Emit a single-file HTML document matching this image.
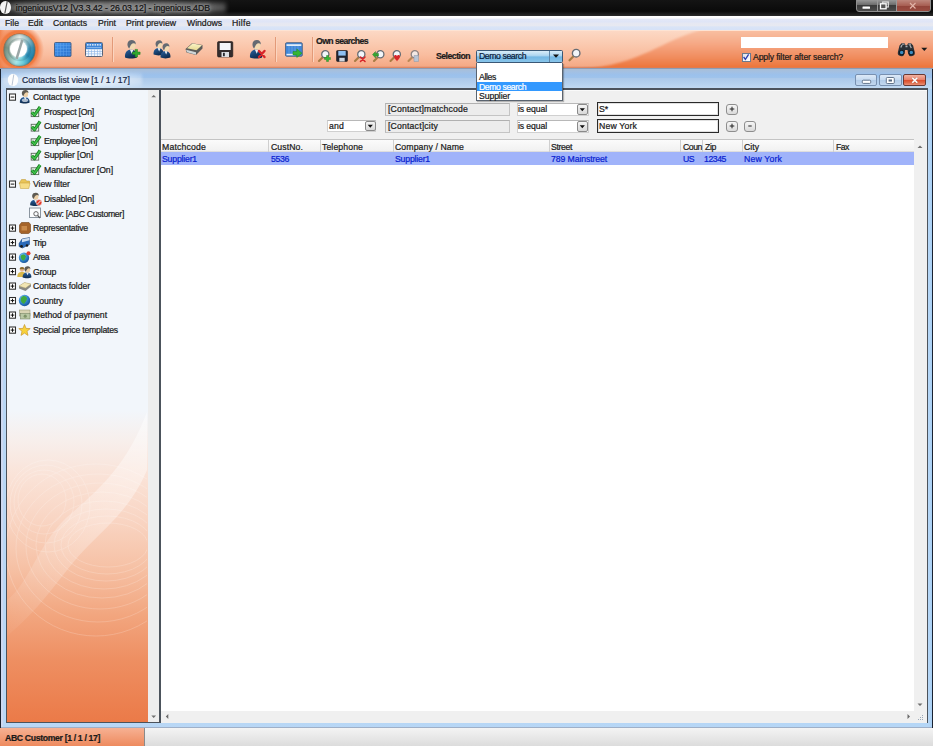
<!DOCTYPE html>
<html><head><meta charset="utf-8"><title>ingeniousV12</title>
<style>
html,body{margin:0;padding:0;}
body{width:933px;height:746px;position:relative;overflow:hidden;background:#fff;font-family:"Liberation Sans",sans-serif;font-size:8.7px;color:#1a1a1a;}
.a{position:absolute;box-sizing:border-box;}
.t{-webkit-text-stroke:.22px currentColor;position:absolute;line-height:12px;height:12px;white-space:pre;font-size:8.7px;}
svg{position:absolute;overflow:visible;}
.fld{background:#ececec;border:1px solid #c4c4c4;border-top-color:#b0b0b0;border-left-color:#b8b8b8;}
.cmb{background:#fff;border:1px solid #d0d0d0;border-top-color:#b8b8b8;}
.cbtn{background:linear-gradient(#f4f4f4,#d8d8d8);border:1px solid #8a8a8a;border-radius:2px;}
.val{background:#fff;border:1px solid #2a2a2a;box-shadow:inset 0 0 0 1px #e0e0e0;}
.pm{background:linear-gradient(#f6f6f6,#dadada);border:1px solid #8e8e8e;border-radius:3px;}
.sep{width:1px;background:#e39a78;box-shadow:1px 0 0 #fbd5c0;}
.col{width:1px;height:12px;top:140px;background:#cfcfcf;}
</style></head><body>
<!-- title bar -->
<div class="a" id="titlebar" style="left:0;top:0;width:933px;height:16px;background:linear-gradient(#141414,#0a0a0a 70%,#2a2a2a 100%);"></div>
<div class="a" style="left:4px;top:1px;width:222px;height:13px;background:radial-gradient(ellipse at center,#8c8c8c 0%,#777 55%,rgba(60,60,60,0) 100%);filter:blur(2px);"></div>
<!-- menubar -->
<div class="a" id="menubar" style="left:0;top:16px;width:933px;height:14px;background:linear-gradient(#ffffff 0%,#fdfdfe 14%,#e3e8f7 24%,#dfe5f6 42%,#e6e8f2 52%,#e7e9f1 68%,#dae4f6 78%,#d6e2f7 100%);"></div>
<!-- toolbar -->
<div class="a" id="toolbar" style="left:0;top:30px;width:933px;height:38px;background:linear-gradient(#fcd9c6 0%,#fbcdb4 30%,#f9bd9f 65%,#f5aa86 94%,#dc8a68 100%);"></div>
<!-- toolbar right darker swoosh -->
<svg style="left:0;top:30px;overflow:hidden" width="933" height="38" viewBox="0 0 933 38">
<defs>
<filter id="sb" x="-5%" y="-50%" width="110%" height="200%"><feGaussianBlur stdDeviation="1.300"/></filter>
<linearGradient id="sw" gradientUnits="userSpaceOnUse" x1="0" y1="0" x2="0" y2="38"><stop offset="0" stop-color="#f9c0a3"/><stop offset="0.35" stop-color="#f6a986"/><stop offset="0.7" stop-color="#f18e60"/><stop offset="1" stop-color="#ec7439"/></linearGradient>
<linearGradient id="swf" x1="0" y1="0" x2="1" y2="0"><stop offset="0" stop-color="#fff" stop-opacity="1"/><stop offset="1" stop-color="#fff" stop-opacity="0"/></linearGradient>
</defs>
<path d="M583 39 C640 35 662 10 704 -1 L704 -8 L945 -8 L945 46 L583 46 Z" fill="url(#sw)" filter="url(#sb)"/>
<rect x="0" y="0" width="933" height="1" fill="#fde3d3"/>
<rect x="0" y="37" width="933" height="1" fill="#d9805c" opacity=".55"/>
</svg>
<!-- logo -->
<div class="a" style="left:0;top:30px;width:16px;height:38px;background:linear-gradient(90deg,rgba(240,122,64,.9) 0,rgba(240,122,64,.5) 5px,rgba(240,122,64,0) 16px);"></div>
<div class="a" style="left:0;top:30px;width:46px;height:38px;background:radial-gradient(circle at 19px 19.500px,#f07a40 0,#f07a40 18.500px,rgba(243,140,92,0.75) 20.500px,rgba(248,175,138,0) 25px);"></div>
<div class="a" style="left:3.500px;top:33.500px;width:31.500px;height:32px;border-radius:50%;background:conic-gradient(from 0deg,#dfe8e6 0deg,#9cc4cb 35deg,#3a8fb2 80deg,#2489b3 125deg,#6fcfdc 165deg,#a8e6e8 195deg,#8fb0a4 235deg,#7a9384 280deg,#a9bab2 320deg,#dfe8e6 360deg);box-shadow:inset 0 0 2.500px rgba(20,50,50,.65),0 0 0 .6px rgba(70,100,90,.6);"></div>
<div class="a" style="left:7.500px;top:38px;width:23.500px;height:23px;border-radius:50%;background:radial-gradient(circle,rgba(255,255,255,0) 55%,rgba(40,80,90,.28) 75%,rgba(255,255,255,0) 100%);"></div>
<div class="a" style="left:10.200px;top:41.200px;width:17px;height:16.300px;border-radius:50%;background:#fff;box-shadow:0 0 1.500px .8px rgba(255,255,255,.55);"></div>
<svg style="left:0;top:30px" width="40" height="38"><path d="M22.300 9.800 L16.600 28.800" stroke="#9aa6a6" stroke-width="2.500" fill="none"/></svg>
<!-- separators -->
<div class="a sep" style="left:112px;top:37px;height:25px;"></div>
<div class="a sep" style="left:275px;top:37px;height:25px;"></div>
<div class="a sep" style="left:312px;top:37px;height:25px;"></div>
<!-- big icons -->
<svg style="left:0;top:30px" width="470" height="38" viewBox="0 30 470 38">
<defs>
<linearGradient id="bl" x1="0" y1="0" x2="1" y2="1"><stop offset="0" stop-color="#4a9af0"/><stop offset="1" stop-color="#1f6ac8"/></linearGradient>
<linearGradient id="suit" x1="0" y1="0" x2=".6" y2="1"><stop offset="0" stop-color="#2c64a4"/><stop offset=".5" stop-color="#1a4676"/><stop offset="1" stop-color="#0e2a4c"/></linearGradient>
<linearGradient id="tray" x1="0" y1="0" x2="0" y2="1"><stop offset="0" stop-color="#fbf5c8"/><stop offset="1" stop-color="#e6d890"/></linearGradient>
<g id="person">
<path d="M-6 8.300 C-6.600 3 -3.500 .3 0 .3 C3.500 .3 6.600 3 6 8.300 C3 9.600 -3 9.600 -6 8.300 Z" fill="url(#suit)"/>
<path d="M-1.200 .3 L.8 4.600 L2.400 .6 Z" fill="#eef0f4"/>
<ellipse cx="1" cy="-4" rx="3.500" ry="4.400" fill="#f2dab2"/>
<path d="M-1.800 -.6 C-5 -4 -3.600 -9.300 1 -9.200 C3.800 -9.100 5 -7 4.700 -4.800 C3.600 -6.400 1.600 -6.300 .2 -4.600 C-.8 -3.400 -1 -2 -1.800 -.6 Z" fill="#646a72"/>
</g>
</defs>
<!-- grid icon -->
<rect x="54.5" y="42.5" width="16.5" height="14" rx="1" fill="url(#bl)" stroke="#4a6488" stroke-width="1"/>
<path d="M57.5 43v13M60.5 43v13M63.5 43v13M66.5 43v13M69 43v13M55 45.5h16M55 48.5h16M55 51.5h16M55 54.2h16" stroke="#6fb0f5" stroke-width=".5" opacity=".7"/>
<!-- calendar icon -->
<rect x="85.500" y="42.500" width="17" height="14" rx="1" fill="#f4f8fd" stroke="#5a6478" stroke-width="1"/>
<rect x="86" y="43" width="16" height="6.200" fill="#3f86d8"/>
<path d="M87 44.800h14" stroke="#fff" stroke-width="1.200" stroke-dasharray="1.600 .9"/>
<path d="M87 47.600h14" stroke="#a8ccf2" stroke-width=".7"/>
<path d="M88.500 49.500v6.500M91.500 49.500v6.500M94.500 49.500v6.500M97.500 49.500v6.500M100 49.500v6.500M86 51.500h16M86 53.800h16" stroke="#8ab4e6" stroke-width=".6"/>
<!-- person add -->
<use href="#person" x="131" y="49.200"/>
<path d="M132.500 52h2.600v-2.600h2.400v2.600h2.600v2.400h-2.600v2.600h-2.400v-2.600h-2.600z" fill="#2fa82f" stroke="#1c7a1c" stroke-width=".5"/>
<!-- two persons -->
<g transform="translate(158.500 47.800) scale(.82)"><use href="#person"/></g>
<g transform="translate(165.500 50.800) scale(.82)"><use href="#person"/></g>
<!-- tray -->
<path d="M185.500 49 L192 43.200 L202.500 45 L202.500 48.500 L196 55 L186.500 52.500 Z" fill="#5c5c5a"/>
<path d="M187 48.300 L192.500 43.500 L202 45.200 L196.500 50.200 Z" fill="url(#tray)"/>
<path d="M186 49.800 L196 52.200 L196 54.800 L187 52.300 Z" fill="#cfd6d8"/>
<!-- floppy -->
<rect x="217.500" y="41.600" width="15.300" height="15.400" rx="1.200" fill="#332c2c" stroke="#1c1616" stroke-width=".6"/>
<rect x="219.700" y="43" width="11" height="7" fill="#f4f6fa"/>
<rect x="221.500" y="52" width="7.500" height="5" fill="#dcdee2"/>
<rect x="223" y="52.800" width="1.800" height="3.400" fill="#2a2a2e"/>
<!-- person delete -->
<use href="#person" x="256" y="49.200"/>
<path d="M259 51 L264.500 57 M264.500 51 L259 57" stroke="#d8262a" stroke-width="2.400" stroke-linecap="round"/>
<!-- calendar arrow -->
<rect x="285.500" y="42.700" width="16.800" height="13.600" rx="1.200" fill="#3f86d8" stroke="#5a6a86" stroke-width="1"/>
<rect x="286.500" y="44.300" width="14.800" height="1.600" fill="#f4f8fd"/>
<rect x="286.500" y="53.800" width="8" height="1.500" fill="#e4eefa"/>
<path d="M289 46v8M292 46v8M295 46v8M298 46v8" stroke="#7fb0e8" stroke-width=".5"/>
<path d="M293 51.500h3.800v-2.600l5.200 4.300-5.200 4.300v-2.600h-3.800z" fill="#35b535" stroke="#1c8a1c" stroke-width=".5"/>
</svg>
<svg style="left:0;top:30px" width="933" height="38" viewBox="0 30 933 38">
<defs>
<g id="mag">
<path d="M1 11 L5 7" stroke="#a87c44" stroke-width="2.100" stroke-linecap="round"/>
<circle cx="7.300" cy="4.300" r="3.600" fill="#f2f6fa" stroke="#666c74" stroke-width="1.300"/>
</g>
</defs>
<use href="#mag" x="318" y="50"/>
<path d="M324.500 57.500h2v-2h2v2h2v2h-2v2h-2v-2h-2z" fill="#35b535" stroke="#1c7a1c" stroke-width=".4"/>
<rect x="336.500" y="50.500" width="11" height="11" rx="1" fill="#1f2430" stroke="#0c0e14" stroke-width=".5"/>
<rect x="338.300" y="51" width="7.400" height="4.600" fill="#8ec0f2"/>
<rect x="339.300" y="57.800" width="5.400" height="3.700" fill="#cfd6df"/>
<use href="#mag" x="354" y="50"/>
<path d="M360.500 57 L365 61.500 M365 57 L360.500 61.500" stroke="#d8262a" stroke-width="1.600" stroke-linecap="round"/>
<use href="#mag" x="373" y="50"/>
<path d="M372.500 54.500 l3-3 v2 h3 v2.500 h-3 v2z" fill="#35a535" stroke="#1c7a1c" stroke-width=".4"/>
<use href="#mag" x="389.500" y="50"/>
<path d="M394 56.500 c0-2 3-2 3 0 c0-2 3-2 3 0 c0 2-3 4-3 5 c0-1-3-3-3-5z" fill="#d8262a"/>
<use href="#mag" x="407.500" y="50" opacity=".75"/>
<path d="M414 55.500 h4.500 v6 h-4.500z" fill="#b8c4d4" stroke="#8a96a8" stroke-width=".5"/>
<!-- magnifier beside combo -->
<g transform="translate(568.500,48.700) scale(1.050)"><use href="#mag"/></g>
<!-- binoculars -->
<path d="M899.500 45.500 l2-2.300 h3 l1 2 h1.600 l1-2 h3 l2 2.300 l1.600 6.500 a3.300 3.300 0 0 1 -6.600 1.500 l-.6-3.500 h-2.400 l-.6 3.500 a3.300 3.300 0 0 1 -6.600-1.500z" fill="#2b3036"/>
<circle cx="901.700" cy="52.500" r="2.300" fill="#3a8cc0" stroke="#121c26" stroke-width="1.100"/>
<circle cx="911.300" cy="52.500" r="2.300" fill="#3a8cc0" stroke="#121c26" stroke-width="1.100"/>
<path d="M902 44.200h2.500M908.500 44.200h2.500" stroke="#aab2ba" stroke-width="1"/>
<path d="M900.800 47.500l1.200-2.600M905.500 46.500h2M909.800 45l1.500 3" stroke="#c8ccd0" stroke-width="1.300" opacity=".8"/>
<path d="M921.300 47.800 h6 l-3 3.200z" fill="#1a1a1a"/>
</svg>
<!-- selection combo -->
<div class="a" style="left:475.800px;top:49.500px;width:87.200px;height:13px;border:1px solid #3a5876;border-radius:1.500px;background:linear-gradient(#d8ecf8 0%,#b0d7f1 40%,#74b7e4 55%,#88c5ea 100%);"></div>
<div class="a" style="left:549px;top:50.500px;width:1px;height:11px;background:#5f86a8;"></div>
<svg style="left:552px;top:53px" width="8" height="6"><path d="M1 1.500h6l-3 3.300z" fill="#111"/></svg>
<!-- search input -->
<div class="a" style="left:741px;top:36.500px;width:147px;height:11.500px;background:#fff;"></div>
<!-- checkbox -->
<div class="a" style="left:741.500px;top:52.500px;width:9px;height:9px;background:linear-gradient(135deg,#dfe3ea,#fff);border:1px solid #6a7a90;"></div>
<svg style="left:741px;top:52px" width="10" height="10"><path d="M2.600 5 L4.400 7.400 L7.600 2.400" stroke="#2a3cae" stroke-width="1.300" fill="none"/></svg>
<!-- top window buttons -->
<div class="a" style="left:856px;top:-2px;width:75px;height:14px;border:1px solid #8f8f8f;border-radius:0 0 3px 3px;background:linear-gradient(#a2a2a2,#6c6c6c 48%,#3a3a3a 52%,#4c4c4c 100%);overflow:hidden;">
<div class="a" style="left:39px;top:0;width:36px;height:14px;background:linear-gradient(#c28e84,#a65c50 50%,#92443a 52%,#9e5044 100%);"></div>
<div class="a" style="left:19.500px;top:0;width:1px;height:14px;background:#9a9a9a;"></div>
<div class="a" style="left:39px;top:0;width:1px;height:14px;background:#9a9a9a;"></div>
</div>
<svg style="left:856px;top:0" width="75" height="12">
<rect x="6.500" y="6.500" width="7.500" height="2.300" fill="#fff" rx=".5"/>
<rect x="26.700" y="2" width="5.600" height="5" fill="none" stroke="#e8e8e8" stroke-width="1.100"/>
<rect x="24.500" y="3.800" width="5.600" height="5" fill="#555" stroke="#fff" stroke-width="1.300"/>
<path d="M54 3 L59.500 8.500 M59.500 3 L54 8.500" stroke="#e2b4a8" stroke-width="1.150"/>
</svg>

<!-- mdi frame -->
<div class="a" id="frame" style="left:0;top:68px;width:933px;height:660px;background:linear-gradient(90deg,#cfd9f0 0,#cdd8f0 3px,#b9d7f5 3.500px,#b5d6f6 929px,#a8cff4 932px,#a8cff4 933px);"></div>
<div class="a" id="frametop" style="left:0;top:68px;width:933px;height:21px;background:linear-gradient(#8c9cb4 0,#8c9cb4 1px,#a8bfd9 1.500px,#a3c0e3 4px,#9bc1ec 7px,#9fc3eb 9.500px,#acc9ea 10.500px,#b4d0ee 15px,#c0d9f2 20px);"></div>
<div class="a" style="left:2px;top:72px;width:140px;height:16px;background:radial-gradient(ellipse at center,rgba(255,255,255,.75) 0%,rgba(255,255,255,.55) 50%,rgba(255,255,255,0) 100%);filter:blur(1.500px);"></div>
<div class="a" style="left:0;top:727px;width:933px;height:1px;background:#9fb0c8;"></div>
<div class="a" style="left:0;top:69px;width:1px;height:659px;background:#1a2230;"></div>
<div class="a" style="left:932px;top:69px;width:1px;height:659px;background:#1a2230;"></div>
<!-- panels -->
<div class="a" id="outer" style="left:6px;top:88.200px;width:921.500px;height:635.300px;background:#4c535c;"></div>
<div class="a" id="tree" style="left:7px;top:89.700px;width:140.500px;height:632.800px;background:linear-gradient(#f2f6fb 0%,#f2f6fb 50.700%,#f7efec 55.400%,#fae3d8 60.900%,#f9d5c3 68%,#f6c1a5 75.600%,#f2a67f 83%,#ee8f62 90.100%,#eb7a48 100%);"></div>
<svg style="left:7px;top:89px" width="140" height="633" viewBox="7 89 140 633">
<defs><clipPath id="tc"><rect x="7" y="89" width="140" height="633"/></clipPath>
<linearGradient id="wv" x1="0" y1="1" x2="1" y2="0"><stop offset="0" stop-color="#fff" stop-opacity=".05"/><stop offset=".45" stop-color="#fff" stop-opacity=".4"/><stop offset="1" stop-color="#fff" stop-opacity=".75"/></linearGradient></defs>
<g clip-path="url(#tc)" fill="none" stroke="#fff">
<path d="M7 600 C28 585 38 545 66 518 C96 492 126 468 147 412 L147 470 C132 505 112 522 88 546 C62 572 46 604 7 636 Z" fill="url(#wv)" stroke="none" opacity=".6"/>
<g opacity=".26" stroke-width=".7">
<ellipse cx="108" cy="545" rx="40" ry="22"/><ellipse cx="107" cy="545" rx="46" ry="29"/><ellipse cx="106" cy="545" rx="52" ry="36"/><ellipse cx="104" cy="545" rx="59" ry="44"/><ellipse cx="102" cy="545" rx="66" ry="53"/><ellipse cx="100" cy="546" rx="74" ry="63"/><ellipse cx="98" cy="548" rx="82" ry="74"/><ellipse cx="96" cy="550" rx="90" ry="86"/>
<ellipse cx="42" cy="500" rx="24" ry="26"/><ellipse cx="44" cy="502" rx="30" ry="32"/><ellipse cx="46" cy="504" rx="36" ry="39"/><ellipse cx="48" cy="506" rx="42" ry="46"/>
</g>
</g></svg>
<div class="a" id="treesb" style="left:147.500px;top:89.700px;width:11.500px;height:632.800px;background:#eeeeee;"></div>
<div class="a" id="right" style="left:161px;top:89.700px;width:765.500px;height:632.800px;background:#f0f0f0;box-shadow:inset 0 1px 0 #fafafa;"></div>
<div class="a" id="list" style="left:161px;top:140px;width:753px;height:571px;background:#fff;"></div>
<div class="a" id="hdr" style="left:161px;top:139px;width:753px;height:13px;background:linear-gradient(#fbfbfb,#f1f1f1);border-top:1px solid #c4c4c4;border-bottom:1px solid #dedede;"></div>
<div class="a" id="sel" style="left:161px;top:152px;width:753px;height:13.300px;background:#a0b3fa;"></div>
<div class="a" id="vsb" style="left:914px;top:140px;width:12.500px;height:571px;background:#f0f0f0;"></div>
<div class="a" id="hsb" style="left:161px;top:711px;width:765.500px;height:11.500px;background:#f0f0f0;"></div>
<!-- mdi title icon -->
<div class="a" style="left:7.500px;top:74px;width:10.500px;height:12px;border-radius:50%;background:#fdfdfd;box-shadow:0 0 1px #fff;"></div>
<svg style="left:7px;top:73px" width="12" height="14"><path d="M6.800 1.500 L5 12.500" stroke="#b9c4d4" stroke-width="1"/></svg>
<!-- title bar icon -->
<div class="a" style="left:-.500px;top:1px;width:11.500px;height:12.500px;border-radius:50%;background:#f4f4f4;"></div>
<svg style="left:-1px;top:0" width="13" height="15"><path d="M8.300 1 L5.800 13.500" stroke="#555" stroke-width="1.200"/></svg>
<!-- mdi buttons -->
<div class="a" style="left:855.300px;top:74.200px;width:22px;height:12.300px;border:1px solid #7890b0;border-radius:2px;background:linear-gradient(#dde9f7,#c6daf0 48%,#b2cce9 52%,#c2d7ee);"></div>
<div class="a" style="left:879.400px;top:74.200px;width:22.200px;height:12.300px;border:1px solid #7890b0;border-radius:2px;background:linear-gradient(#dde9f7,#c6daf0 48%,#b2cce9 52%,#c2d7ee);"></div>
<div class="a" style="left:903.400px;top:74.200px;width:22.300px;height:12.300px;border:1px solid #6a3a34;border-radius:2px;background:linear-gradient(#f2b2a2,#e8836c 45%,#dc4c2c 52%,#e06c4a 78%,#ec9078 100%);"></div>
<svg style="left:855px;top:74px" width="72" height="13">
<rect x="7.300" y="6.200" width="8.400" height="3.200" rx="1" fill="#fff" stroke="#55677f" stroke-width=".9"/>
<rect x="31.300" y="3.500" width="8" height="6" rx="1" fill="#fff" stroke="#55677f" stroke-width=".9"/>
<rect x="33.600" y="5.500" width="3.400" height="2" fill="#55677f"/>
<path d="M57.300 3.800 L62.300 8.800 M62.300 3.800 L57.300 8.800" stroke="#8a5a50" stroke-width="2.500" opacity=".5"/><path d="M57.300 3.800 L62.300 8.800 M62.300 3.800 L57.300 8.800" stroke="#fff" stroke-width="1.600"/>
</svg>
<!-- filter controls -->
<div class="a fld" style="left:385px;top:103px;width:124.500px;height:12.500px;"></div>
<div class="a fld" style="left:385px;top:120px;width:124.500px;height:12.500px;"></div>
<div class="a cmb" style="left:516.500px;top:103px;width:72px;height:12.500px;"></div>
<div class="a cmb" style="left:516.500px;top:120px;width:72px;height:12.500px;"></div>
<div class="a cmb" style="left:327px;top:119.500px;width:49px;height:12.500px;"></div>
<div class="a cbtn" style="left:577px;top:104px;width:10.500px;height:10.500px;"></div>
<div class="a cbtn" style="left:577px;top:121px;width:10.500px;height:10.500px;"></div>
<div class="a cbtn" style="left:365px;top:120.500px;width:10.500px;height:10.500px;"></div>
<svg style="left:0;top:0" width="933" height="140">
<path d="M579.700 108.300h5.200l-2.600 3z M579.700 125.300h5.200l-2.600 3z M367.700 124.800h5.200l-2.600 3z" fill="#111"/>
</svg>
<div class="a val" style="left:597px;top:102px;width:121.500px;height:14px;"></div>
<div class="a val" style="left:597px;top:119px;width:121.500px;height:14px;"></div>
<div class="a pm" style="left:726px;top:103.500px;width:12px;height:11px;"></div>
<div class="a pm" style="left:726px;top:120.500px;width:12px;height:11px;"></div>
<div class="a pm" style="left:744px;top:120.500px;width:12px;height:11px;"></div>
<svg style="left:0;top:0" width="933" height="140">
<path d="M729.700 109h4.600M732 106.700v4.600M729.700 126h4.600M732 123.700v4.600M748.300 126h3.400" stroke="#222" stroke-width="1"/>
</svg>
<!-- column separators -->
<div class="a col" style="left:268px;"></div>
<div class="a col" style="left:320px;"></div>
<div class="a col" style="left:393px;"></div>
<div class="a col" style="left:549px;"></div>
<div class="a col" style="left:680px;"></div>
<div class="a col" style="left:702px;"></div>
<div class="a col" style="left:742px;"></div>
<div class="a col" style="left:833px;"></div>
<!-- scrollbar arrows -->
<svg style="left:0;top:0" width="933" height="746">
<path d="M151.300 97.300l2.400-2.400 2.400 2.400z M151.300 715.500l2.400 2.400 2.400-2.400z M917.500 148l2.500-2.500 2.500 2.500z M917.500 703.500l2.500 2.500 2.500-2.500z" fill="#707070"/>
<path d="M168.300 714l-2.500 2.500 2.500 2.500z M907.500 714l2.500 2.500-2.500 2.500z" fill="#6a6a6a"/>
<g fill="#9aa8b8"><rect x="922" y="719" width="1" height="1"/><rect x="920" y="719" width="1" height="1"/><rect x="922" y="717" width="1" height="1"/><rect x="918" y="719" width="1" height="1"/><rect x="920" y="717" width="1" height="1"/><rect x="922" y="715" width="1" height="1"/></g>
</svg>
<!-- dropdown list -->
<div class="a" style="left:475.800px;top:62.500px;width:87.200px;height:38.500px;background:#fff;border:1px solid #5a6470;border-top:none;box-shadow:1px 1px 1px rgba(0,0,0,.25);"></div>
<div class="a" style="left:476.800px;top:82px;width:85.200px;height:9px;background:#3399ff;"></div>
<svg style="left:0;top:0" width="160" height="345" viewBox="0 0 160 345">
<defs>
<linearGradient id="tsuit" x1="0" y1="0" x2="0" y2="1"><stop offset="0" stop-color="#2a62a2"/><stop offset="1" stop-color="#0e2a4c"/></linearGradient>
<radialGradient id="globe" cx=".35" cy=".3" r=".8"><stop offset="0" stop-color="#7cc3f2"/><stop offset=".6" stop-color="#2a7cc8"/><stop offset="1" stop-color="#174a8a"/></radialGradient>
<g id="tp"><g transform="scale(.8)"><path d="M-6 7.300 C-6.600 3 -3.500 .3 0 .3 C3.500 .3 6.600 3 6 7.300 C3 8.600 -3 8.600 -6 7.300 Z" fill="url(#tsuit)"/><path d="M-1.200 .3 L.8 4.200 L2.400 .6 Z" fill="#eef0f4"/><ellipse cx="1" cy="-3.600" rx="3.300" ry="4" fill="#eccfa6"/><path d="M-1.800 -.6 C-5 -4 -3.600 -8.600 1 -8.500 C3.800 -8.400 5 -6.600 4.700 -4.600 C3.600 -6 1.600 -5.900 .2 -4.300 C-.8 -3.200 -1 -2 -1.800 -.6 Z" fill="#5e5a52"/></g></g>
<g id="chk"><rect x="-4.300" y="-2.200" width="7.500" height="6.800" fill="#f2f4f2" stroke="#5a6a5a" stroke-width=".9"/><path d="M-3.600 .2 L-1 3.200 L4.600 -5" stroke="#167a1c" stroke-width="3.200" fill="none" stroke-linejoin="round"/><path d="M-3.600 .2 L-1 3.200 L4.600 -5" stroke="#3fc04a" stroke-width="1.700" fill="none" stroke-linejoin="round"/></g>
<g id="box"><rect x="-3" y="-3" width="6" height="6.200" fill="#fdfdfd" stroke="#2e2e2e" stroke-width="1.050"/><path d="M-1.800 .1H1.800" stroke="#111" stroke-width="1"/></g>
<g id="boxp"><use href="#box"/><path d="M0 -1.700V1.900" stroke="#111" stroke-width="1"/></g>
</defs>
<use href="#box" x="12.5" y="97"/>
<use href="#box" x="12.5" y="184"/>
<use href="#boxp" x="12.5" y="228"/>
<use href="#boxp" x="12.5" y="242.5"/>
<use href="#boxp" x="12.5" y="257"/>
<use href="#boxp" x="12.5" y="271.5"/>
<use href="#boxp" x="12.5" y="286"/>
<use href="#boxp" x="12.5" y="300.5"/>
<use href="#boxp" x="12.5" y="315"/>
<use href="#boxp" x="12.5" y="330"/>
<use href="#tp" x="24.7" y="96.8"/>
<ellipse cx="25" cy="100.300" rx="3.200" ry="1.800" fill="#cfd8e4" opacity=".8"/>
<use href="#chk" x="35.5" y="112"/>
<use href="#chk" x="35.5" y="126.5"/>
<use href="#chk" x="35.5" y="141"/>
<use href="#chk" x="35.5" y="155.5"/>
<use href="#chk" x="35.5" y="170"/>
<path d="M19 183.5 l2.500-4 h4 l1 1.500 h3 v3z" fill="#e9c458" stroke="#b8922e" stroke-width=".5"/>
<path d="M19.500 183 h10.500 l-1.200 5.500 h-8.300z" fill="#f6dc86" stroke="#c39a34" stroke-width=".5"/>
<use href="#tp" x="35" y="199.5"/>
<circle cx="39" cy="202.500" r="2.900" fill="#e23a2c" stroke="#fff" stroke-width=".5"/><path d="M37.300 204.200 L40.700 200.800" stroke="#fff" stroke-width="1"/>
<rect x="29.500" y="208" width="11" height="9.500" fill="#fbfcfd" stroke="#7f8a96" stroke-width=".9"/><circle cx="36" cy="213.800" r="2.200" fill="none" stroke="#555" stroke-width=".9"/><path d="M37.600 215.500 L40 218" stroke="#555" stroke-width="1.200"/>
<path d="M19.500 225 l2-2.500 h7.500 l1.500 2 v7.500 l-2 1.500 h-7.500 l-1.500-1.500z" fill="#a5642a" stroke="#6e3e14" stroke-width=".6"/><rect x="21.500" y="226" width="5.500" height="4.500" fill="#c98a4a"/>
<path d="M19 243.5 l3-4.500 l7.500-1.500 v7 l-7 3.500 l-3.500-1.500z" fill="#2a6ab8" stroke="#163a6c" stroke-width=".5"/><path d="M22 239.2 l7.500-1.500 v2.500 l-7.500 2z" fill="#cfe0f2"/><circle cx="21.500" cy="246.3" r="1.400" fill="#1a1a1a"/><circle cx="27" cy="245.5" r="1.300" fill="#1a1a1a"/>
<circle cx="24" cy="257.8" r="5.200" fill="url(#globe)"/><path d="M21 255.5 c2-2 4-1 5 1 c-1 2-1 4-3 4 c-1-1-3-3-2-5z" fill="#3faa3f"/><circle cx="28.500" cy="253.2" r="2" fill="#e2402c"/>
<g transform="translate(22 271.5) scale(.9)"><path d="M-5.200 6 C-5.200 2 -3 .6 0 .6 C3 .6 5.200 2 5.200 6 Z" fill="#d9b84a"/><ellipse cx="0" cy="-2.300" rx="2.300" ry="2.700" fill="#e6b58c"/><path d="M-2.600 -2.600 C-2.800 -5.800 2.800 -5.800 2.600 -2.600Z" fill="#8a6a2a"/></g>
<g transform="translate(27 272.3) scale(.9)"><use href="#tp"/></g>
<path d="M19 286 l5.500-3.500 l6.500 1.500 v2.500 l-5.500 4.500 l-6.500-2.500z" fill="#8a8a84"/><path d="M19 286 l5.500-3.500 l6.500 1.500 l-5.500 4z" fill="#f2e6b4" stroke="#b8a86a" stroke-width=".4"/>
<circle cx="24.500" cy="300.5" r="5.700" fill="url(#globe)"/><path d="M21 298 c2-3 5-2 6 0 c0 3-2 4-3 6 c-2-1-4-3-3-6z" fill="#3faa3f"/>
<rect x="19.500" y="310" width="10.500" height="6" fill="#d8d4b4" stroke="#8a8a6a" stroke-width=".5"/><rect x="20.500" y="313.5" width="9.500" height="5.500" fill="#b9c8a4" stroke="#6a7a5a" stroke-width=".5"/><circle cx="25.200" cy="316.2" r="1.600" fill="#7f946a"/>
<polygon points="24.5,324.5 26.0,328.4 30.2,328.6 27.0,331.3 28.0,335.4 24.5,333.1 21.0,335.4 22.0,331.3 18.8,328.6 23.0,328.4" fill="#f8d23a" stroke="#c8962a" stroke-width=".7" stroke-linejoin="round"/>
</svg>

<!-- status bar -->
<div class="a" id="status" style="left:0;top:728px;width:933px;height:18px;background:linear-gradient(#f4f4f4,#dcdcdc);"></div>
<div class="a" id="statusl" style="left:0;top:728px;width:145px;height:18px;background:linear-gradient(#f7b193,#ee8a5e);border-right:1px solid #8a8a8a;"></div>
<span class="t" style="left:15.8px;top:1.8px;letter-spacing:-0.03px;color:#111;text-shadow:0 0 3px #aaa,0 0 5px #999,0 0 7px #888">ingeniousV12 [V3.3.42 - 26.03.12] - ingenious.4DB</span>
<span class="t" style="left:5px;top:17px;letter-spacing:0.00px;">File</span>
<span class="t" style="left:28px;top:17px;letter-spacing:0.00px;">Edit</span>
<span class="t" style="left:53px;top:17px;letter-spacing:-0.04px;">Contacts</span>
<span class="t" style="left:98px;top:17px;letter-spacing:0.03px;">Print</span>
<span class="t" style="left:126px;top:17px;letter-spacing:-0.02px;">Print preview</span>
<span class="t" style="left:187px;top:17px;letter-spacing:-0.04px;">Windows</span>
<span class="t" style="left:232px;top:17px;letter-spacing:0.32px;">Hilfe</span>
<span class="t" style="left:316px;top:35px;letter-spacing:-0.58px;font-weight:bold">Own searches</span>
<span class="t" style="left:436px;top:50px;letter-spacing:-0.51px;font-weight:bold">Selection</span>
<span class="t" style="left:479px;top:50px;letter-spacing:-0.42px;color:#0a1a3a">Demo search</span>
<span class="t" style="left:479px;top:71px;letter-spacing:-0.37px;">Alles</span>
<span class="t" style="left:479px;top:80.5px;letter-spacing:-0.42px;color:#fff">Demo search</span>
<span class="t" style="left:479px;top:90px;letter-spacing:-0.11px;">Supplier</span>
<span class="t" style="left:753px;top:51px;letter-spacing:-0.14px;">Apply filter after search?</span>
<span class="t" style="left:22px;top:74px;letter-spacing:-0.01px;color:#1a2a4a">Contacts list view [1 / 1 / 17]</span>
<span class="t" style="left:33px;top:91px;letter-spacing:-0.15px;">Contact type</span>
<span class="t" style="left:44px;top:105.5px;letter-spacing:-0.24px;">Prospect [On]</span>
<span class="t" style="left:44px;top:120px;letter-spacing:-0.27px;">Customer [On]</span>
<span class="t" style="left:44px;top:134.5px;letter-spacing:-0.34px;">Employee [On]</span>
<span class="t" style="left:44px;top:149px;letter-spacing:-0.13px;">Supplier [On]</span>
<span class="t" style="left:44px;top:163.5px;letter-spacing:-0.06px;">Manufacturer [On]</span>
<span class="t" style="left:33px;top:178px;letter-spacing:-0.05px;">View filter</span>
<span class="t" style="left:44px;top:193px;letter-spacing:-0.20px;">Disabled [On]</span>
<span class="t" style="left:44px;top:207.5px;letter-spacing:-0.31px;">View: [ABC Customer]</span>
<span class="t" style="left:33px;top:222px;letter-spacing:-0.25px;">Representative</span>
<span class="t" style="left:33px;top:236.5px;letter-spacing:-0.41px;">Trip</span>
<span class="t" style="left:33px;top:251px;letter-spacing:-0.59px;">Area</span>
<span class="t" style="left:33px;top:265.5px;letter-spacing:-0.23px;">Group</span>
<span class="t" style="left:33px;top:280px;letter-spacing:-0.10px;">Contacts folder</span>
<span class="t" style="left:33px;top:294.5px;letter-spacing:-0.06px;">Country</span>
<span class="t" style="left:33px;top:309px;letter-spacing:-0.02px;">Method of payment</span>
<span class="t" style="left:33px;top:324px;letter-spacing:-0.21px;">Special price templates</span>
<span class="t" style="left:388px;top:103px;letter-spacing:0.15px;">[Contact]matchcode</span>
<span class="t" style="left:518px;top:103px;letter-spacing:-0.12px;">is equal</span>
<span class="t" style="left:599px;top:103px;letter-spacing:-0.09px;">S*</span>
<span class="t" style="left:329px;top:120px;letter-spacing:0.17px;">and</span>
<span class="t" style="left:388px;top:120px;letter-spacing:0.17px;">[Contact]city</span>
<span class="t" style="left:518px;top:120px;letter-spacing:-0.12px;">is equal</span>
<span class="t" style="left:599px;top:120px;letter-spacing:0.16px;">New York</span>
<span class="t" style="left:162px;top:140.5px;letter-spacing:0.17px;">Matchcode</span>
<span class="t" style="left:271px;top:140.5px;letter-spacing:0.09px;">CustNo.</span>
<span class="t" style="left:322px;top:140.5px;letter-spacing:0.10px;">Telephone</span>
<span class="t" style="left:395px;top:140.5px;letter-spacing:0.10px;">Company / Name</span>
<span class="t" style="left:551px;top:140.5px;letter-spacing:-0.36px;">Street</span>
<span class="t" style="left:683px;top:140.5px;letter-spacing:-0.45px;">Coun</span>
<span class="t" style="left:705px;top:140.5px;letter-spacing:-0.36px;">Zip</span>
<span class="t" style="left:744px;top:140.5px;letter-spacing:0.01px;">City</span>
<span class="t" style="left:836px;top:140.5px;letter-spacing:-0.60px;">Fax</span>
<span class="t" style="left:162px;top:153px;letter-spacing:-0.19px;color:#0a22d0">Supplier1</span>
<span class="t" style="left:271px;top:153px;letter-spacing:-0.33px;color:#0a22d0">5536</span>
<span class="t" style="left:395px;top:153px;letter-spacing:-0.19px;color:#0a22d0">Supplier1</span>
<span class="t" style="left:551px;top:153px;letter-spacing:-0.10px;color:#0a22d0">789 Mainstreet</span>
<span class="t" style="left:683px;top:153px;letter-spacing:-0.60px;color:#0a22d0">US</span>
<span class="t" style="left:704px;top:153px;letter-spacing:-0.43px;color:#0a22d0">12345</span>
<span class="t" style="left:744px;top:153px;letter-spacing:0.16px;color:#0a22d0">New York</span>
<span class="t" style="left:5px;top:732px;letter-spacing:-0.35px;font-weight:bold">ABC Customer [1 / 1 / 17]</span>
<!--OVER-->
</body></html>
